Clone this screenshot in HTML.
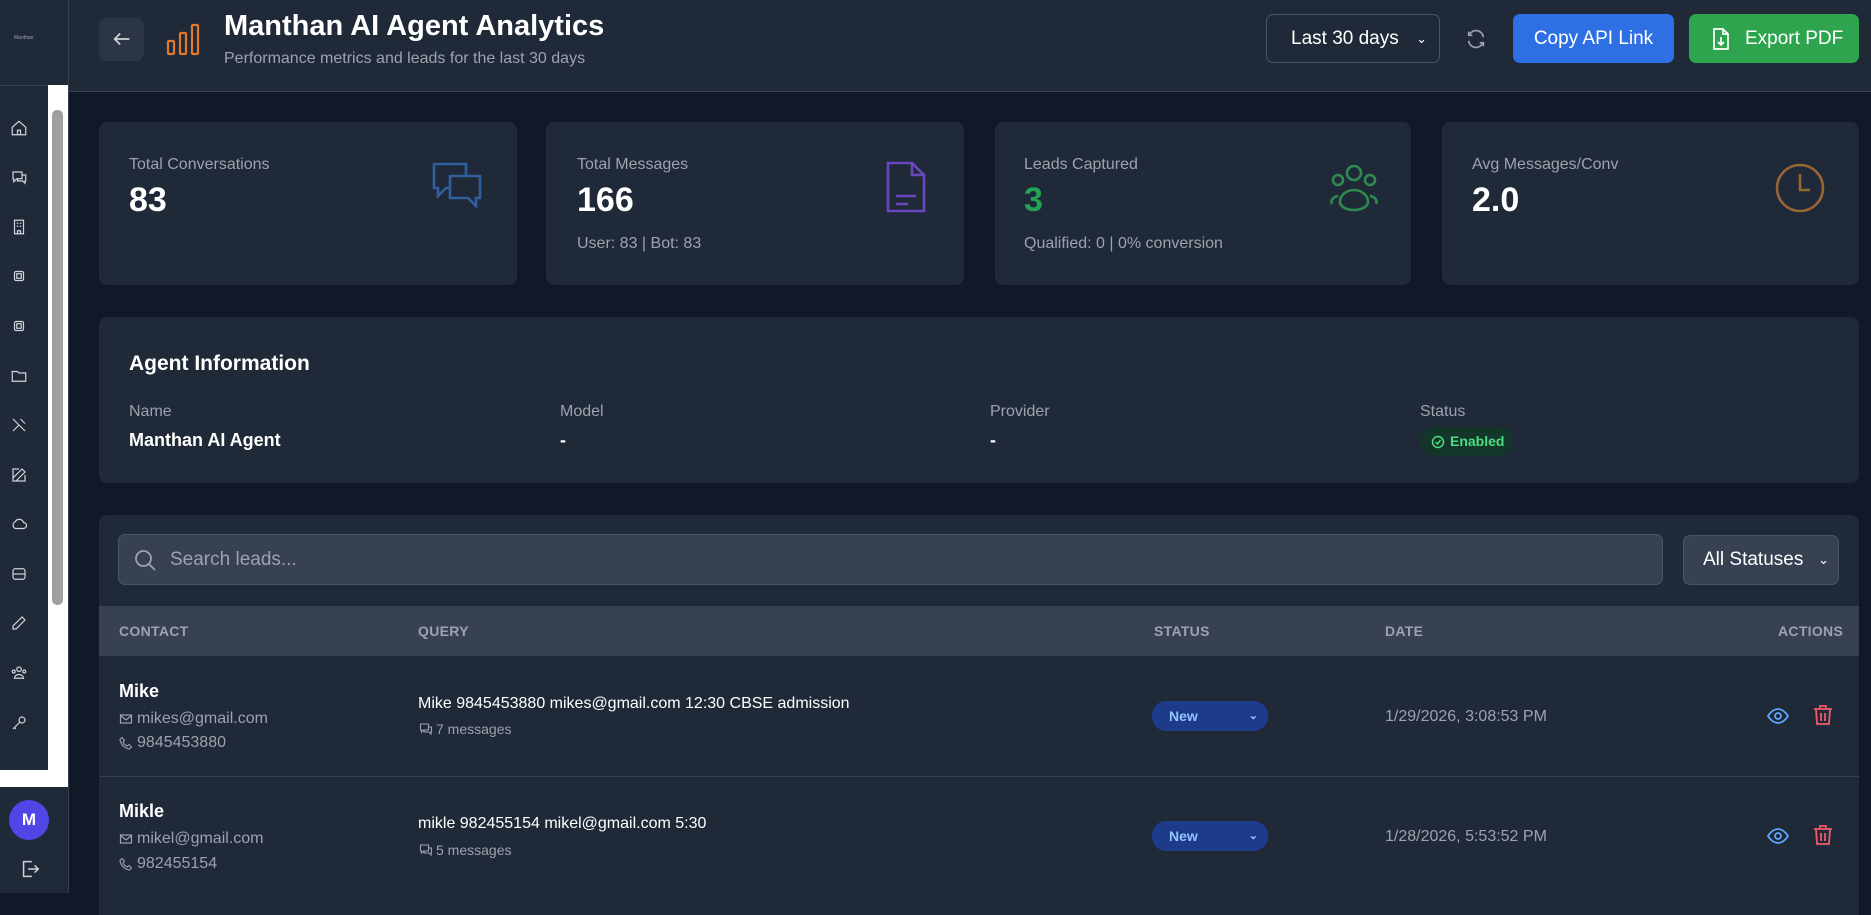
<!DOCTYPE html>
<html><head><meta charset="utf-8"><style>
*{box-sizing:border-box;margin:0;padding:0}
body{width:1871px;height:893px;overflow:hidden;background:#111827;font-family:"Liberation Sans",sans-serif;color:#fff;position:relative}
.a{position:absolute}
.side{left:0;top:0;width:69px;height:893px;background:#1f2937;border-right:1px solid #374151}
.ic{left:10px;width:18px;height:18px;stroke:#d1d5db;fill:none;stroke-width:1.6}
.card{background:#1f2937;border-radius:8px}
.lbl{font-size:16px;color:#9ca3af}
.val{font-size:34px;font-weight:bold}
.sub{font-size:16px;color:#9ca3af}
.th{font-size:14px;color:#9ca3af;top:623px;font-weight:bold;letter-spacing:.3px}
.badge{background:#1e3a8a;color:#93c5fd;border-radius:14px;font-size:14px;font-weight:bold;padding:0 0 0 17px;width:116px;height:30px;line-height:30px}
</style></head><body>
<div class="a side">
 <div class="a" style="left:14px;top:35px;font-size:5px;color:#9ca3af">Manthan</div>
 <div class="a" style="left:0;top:85px;width:69px;border-top:1px solid #374151"></div>
 <div class="a" style="left:48px;top:85px;width:20px;height:702px;background:#fff"></div>
 <div class="a" style="left:52px;top:110px;width:11px;height:495px;background:#a0a0a0;border-radius:5px"></div>
 <div class="a" style="left:0;top:770px;width:68px;height:17px;background:#fff"></div>
 <svg class="a ic" style="top:119px" viewBox="0 0 24 24"><path d="M3 11l9-8 9 8v10H3z M10 21v-6h4v6"/></svg>
 <svg class="a ic" style="top:169px" viewBox="0 0 24 24"><path d="M4 4h12v9H9l-4 4v-4H4z M10 13v3h7l3 3v-3h1V8h-5"/></svg>
 <svg class="a ic" style="top:218px" viewBox="0 0 24 24"><path d="M6 3h12v18H6z M9 7h2 M13 7h2 M9 11h2 M13 11h2 M10 21v-4h4v4"/></svg>
 <svg class="a ic" style="top:267px" viewBox="0 0 24 24"><rect x="6" y="6" width="12" height="12" rx="2"/><rect x="9" y="9" width="6" height="6"/></svg>
 <svg class="a ic" style="top:317px" viewBox="0 0 24 24"><rect x="6" y="6" width="12" height="12" rx="2"/><rect x="9" y="9" width="6" height="6"/></svg>
 <svg class="a ic" style="top:367px" viewBox="0 0 24 24"><path d="M3 6h7l2 2h9v11H3z"/></svg>
 <svg class="a ic" style="top:416px" viewBox="0 0 24 24"><path d="M4 20l8-8 M14 4l6 6 M4 4l16 16"/></svg>
 <svg class="a ic" style="top:466px" viewBox="0 0 24 24"><path d="M4 20h4L20 8l-4-4L4 16z M12 4H4v16h16v-8"/></svg>
 <svg class="a ic" style="top:515px" viewBox="0 0 24 24"><path d="M7 18h11a4 4 0 0 0 0-8 6 6 0 0 0-11-1 5 5 0 0 0 0 9z"/></svg>
 <svg class="a ic" style="top:565px" viewBox="0 0 24 24"><rect x="4" y="5" width="16" height="14" rx="3"/><path d="M4 12h16"/></svg>
 <svg class="a ic" style="top:614px" viewBox="0 0 24 24"><path d="M4 20h4L20 8l-4-4L4 16z"/></svg>
 <svg class="a ic" style="top:664px" viewBox="0 0 24 24"><circle cx="12" cy="7" r="3"/><circle cx="5" cy="10" r="2"/><circle cx="19" cy="10" r="2"/><path d="M6 19a6 5 0 0 1 12 0z"/></svg>
 <svg class="a ic" style="top:714px" viewBox="0 0 24 24"><circle cx="16" cy="8" r="4"/><path d="M13 11l-9 9 M6 18l2 2"/></svg>
 <div class="a" style="left:9px;top:800px;width:40px;height:40px;border-radius:50%;background:#4f46e5;font-weight:bold;font-size:17px;line-height:40px;text-align:center">M</div>
 <svg class="a" style="left:19px;top:858px;width:22px;height:22px;fill:none;stroke:#d1d5db;stroke-width:1.6" viewBox="0 0 24 24"><path d="M14 4H5v16h9 M10 12h11 M17 8l4 4-4 4"/></svg>
</div>
<div class="a" style="left:69px;top:0;width:1802px;height:92px;background:#1f2937;border-bottom:1px solid #374151"></div>
<div class="a" style="left:99px;top:18px;width:45px;height:43px;border-radius:8px;background:#2b3544"></div>
<svg class="a" style="left:111px;top:28px;width:22px;height:22px;fill:none;stroke:#d1d5db;stroke-width:1.8" viewBox="0 0 24 24"><path d="M20 12H4 M10 6l-6 6 6 6"/></svg>
<svg class="a" style="left:166px;top:22px;width:35px;height:34px;fill:none;stroke:#e07a2a;stroke-width:2.2" viewBox="0 0 35 34"><rect x="2" y="19" width="6" height="13" rx="1"/><rect x="14" y="11" width="6" height="21" rx="1"/><rect x="26" y="3" width="6" height="29" rx="1"/></svg>
<div class="a" style="left:224px;top:10px;font-size:29px;font-weight:bold">Manthan AI Agent Analytics</div>
<div class="a" style="left:224px;top:50px;font-size:16px;color:#9ca3af">Performance metrics and leads for the last 30 days</div>
<div class="a" style="left:1266px;top:14px;width:174px;height:49px;border:1px solid #4b5563;border-radius:7px;font-size:19px;line-height:47px;padding-left:24px">Last 30 days <span style="position:absolute;right:12px;font-size:13px">&#8964;</span></div>
<svg class="a" style="left:1465px;top:28px;width:22px;height:22px;fill:none;stroke:#9ca3af;stroke-width:1.8" viewBox="0 0 24 24"><path d="M20 10a8 8 0 0 0-15-3 M4 4v4h4 M4 14a8 8 0 0 0 15 3 M20 20v-4h-4"/></svg>
<div class="a" style="left:1513px;top:14px;width:161px;height:49px;background:#2f6fe4;border-radius:7px;font-size:19px;line-height:49px;text-align:center">Copy API Link</div>
<div class="a" style="left:1689px;top:14px;width:170px;height:49px;background:#2ea44f;border-radius:7px;font-size:19px;line-height:49px;padding-left:56px">Export PDF</div>
<svg class="a" style="left:1711px;top:28px;width:20px;height:22px;fill:none;stroke:#fff;stroke-width:1.7" viewBox="0 0 20 22"><path d="M3 1h9l5 5v15H3z M12 1v5h5 M10 9v8 M7 14l3 3 3-3"/></svg>

<div class="a card" style="left:99px;top:122px;width:418px;height:163px"></div>
<div class="a card" style="left:546px;top:122px;width:418px;height:163px"></div>
<div class="a card" style="left:995px;top:122px;width:416px;height:163px"></div>
<div class="a card" style="left:1442px;top:122px;width:417px;height:163px"></div>
<div class="a lbl" style="left:129px;top:156px">Total Conversations</div>
<div class="a val" style="left:129px;top:181px">83</div>
<div class="a lbl" style="left:577px;top:156px">Total Messages</div>
<div class="a val" style="left:577px;top:181px">166</div>
<div class="a sub" style="left:577px;top:235px">User: 83 | Bot: 83</div>
<div class="a lbl" style="left:1024px;top:156px">Leads Captured</div>
<div class="a val" style="left:1024px;top:181px;color:#22a355">3</div>
<div class="a sub" style="left:1024px;top:235px">Qualified: 0 | 0% conversion</div>
<div class="a lbl" style="left:1472px;top:156px">Avg Messages/Conv</div>
<div class="a val" style="left:1472px;top:181px">2.0</div>
<svg class="a" style="left:430px;top:160px;width:54px;height:52px;fill:none;stroke:#2f5f9e;stroke-width:2.6" viewBox="0 0 54 52"><path d="M4 4h32v24H16l-8 8v-8H4z"/><path d="M20 16h30v22h-4v8l-8-8H20z" fill="#1f2937"/></svg>
<svg class="a" style="left:884px;top:160px;width:44px;height:54px;fill:none;stroke:#6b46c1;stroke-width:2.6" viewBox="0 0 44 54"><path d="M4 3h24l12 12v36H4z M28 3v12h12 M12 36h20 M12 44h12"/></svg>
<svg class="a" style="left:1326px;top:162px;width:56px;height:52px;fill:none;stroke:#2f8a4f;stroke-width:2.6" viewBox="0 0 56 52"><circle cx="28" cy="11" r="7"/><circle cx="12" cy="18" r="5"/><circle cx="44" cy="18" r="5"/><path d="M6 42a8 6 0 0 1 6-8 M50 42a8 6 0 0 0-6-8 M14 40a14 12 0 0 1 28 0a14 8 0 0 1-28 0z"/></svg>
<svg class="a" style="left:1774px;top:162px;width:52px;height:52px;fill:none;stroke:#9a6535;stroke-width:2.6" viewBox="0 0 52 52"><circle cx="26" cy="26" r="23"/><path d="M26 12v16h10"/></svg>

<div class="a card" style="left:99px;top:317px;width:1760px;height:166px"></div>
<div class="a" style="left:129px;top:352px;font-size:21px;font-weight:bold">Agent Information</div>
<div class="a lbl" style="left:129px;top:403px">Name</div>
<div class="a" style="left:129px;top:430px;font-size:18px;font-weight:bold">Manthan AI Agent</div>
<div class="a lbl" style="left:560px;top:403px">Model</div>
<div class="a" style="left:560px;top:430px;font-size:18px;font-weight:bold">-</div>
<div class="a lbl" style="left:990px;top:403px">Provider</div>
<div class="a" style="left:990px;top:430px;font-size:18px;font-weight:bold">-</div>
<div class="a lbl" style="left:1420px;top:403px">Status</div>
<div class="a" style="left:1420px;top:427px;height:29px;width:93px;border-radius:14px;background:#14352a;color:#4ade80;font-size:14px;font-weight:bold;line-height:29px;padding-left:30px">Enabled</div>
<svg class="a" style="left:1431px;top:435px;width:14px;height:14px;fill:none;stroke:#4ade80;stroke-width:1.5" viewBox="0 0 14 14"><circle cx="7" cy="7" r="5.5"/><path d="M4.5 7l2 2 3-4"/></svg>

<div class="a card" style="left:99px;top:515px;width:1760px;height:400px;border-radius:8px 8px 0 0"></div>
<div class="a" style="left:118px;top:534px;width:1545px;height:51px;background:#374151;border:1px solid #4b5563;border-radius:7px;font-size:19px;color:#9ca3af;line-height:49px;padding-left:51px">Search leads...</div>
<svg class="a" style="left:134px;top:549px;width:22px;height:22px;fill:none;stroke:#9ca3af;stroke-width:1.8" viewBox="0 0 22 22"><circle cx="9.5" cy="9.5" r="7.5"/><path d="M15 15l6 6"/></svg>
<div class="a" style="left:1683px;top:535px;width:156px;height:50px;background:#374151;border:1px solid #4b5563;border-radius:7px;font-size:19px;line-height:48px;padding-left:19px">All Statuses <span style="position:absolute;right:9px;font-size:13px">&#8964;</span></div>
<div class="a" style="left:99px;top:606px;width:1760px;height:50px;background:#374151"></div>
<div class="a th" style="left:119px">CONTACT</div>
<div class="a th" style="left:418px">QUERY</div>
<div class="a th" style="left:1154px">STATUS</div>
<div class="a th" style="left:1385px">DATE</div>
<div class="a th" style="left:1778px">ACTIONS</div>

<div class="a" style="left:119px;top:681px;font-size:18px;font-weight:bold">Mike</div>
<div class="a sub" style="left:137px;top:710px;font-size:16px">mikes@gmail.com</div>
<div class="a sub" style="left:137px;top:734px;font-size:16px">9845453880</div>
<div class="a" style="left:418px;top:695px;font-size:16px">Mike 9845453880 mikes@gmail.com 12:30 CBSE admission</div>
<div class="a" style="left:436px;top:721px;font-size:14px;color:#9ca3af">7 messages</div>
<div class="a badge" style="left:1152px;top:701px">New<span style="position:absolute;right:10px;font-size:11px">&#8964;</span></div>
<div class="a sub" style="left:1385px;top:708px;font-size:16px">1/29/2026, 3:08:53 PM</div>
<div class="a" style="left:99px;top:776px;width:1760px;border-top:1px solid #374151"></div>
<div class="a" style="left:119px;top:801px;font-size:18px;font-weight:bold">Mikle</div>
<div class="a sub" style="left:137px;top:830px;font-size:16px">mikel@gmail.com</div>
<div class="a sub" style="left:137px;top:855px;font-size:16px">982455154</div>
<div class="a" style="left:418px;top:815px;font-size:16px">mikle 982455154 mikel@gmail.com 5:30</div>
<div class="a" style="left:436px;top:842px;font-size:14px;color:#9ca3af">5 messages</div>
<div class="a badge" style="left:1152px;top:821px">New<span style="position:absolute;right:10px;font-size:11px">&#8964;</span></div>
<div class="a sub" style="left:1385px;top:828px;font-size:16px">1/28/2026, 5:53:52 PM</div>

<svg width="0" height="0"><defs>
<symbol id="mail" viewBox="0 0 14 14"><rect x="1.5" y="3" width="11" height="8" fill="none" stroke="#9ca3af" stroke-width="1.2"/><path d="M1.5 3.5L7 8l5.5-4.5" fill="none" stroke="#9ca3af" stroke-width="1.2"/></symbol>
<symbol id="ph" viewBox="0 0 14 14"><path d="M3 1.5l2.5 2.5-1.5 2a8 8 0 0 0 4 4l2-1.5 2.5 2.5-2 2A11 11 0 0 1 1 3.5z" fill="none" stroke="#9ca3af" stroke-width="1.1"/></symbol>
<symbol id="msg" viewBox="0 0 14 14"><path d="M1.5 2h8v6h-5l-2 2V8h-1z M5 8v2h5l2 2v-2h.5V5h-3" fill="none" stroke="#9ca3af" stroke-width="1.1"/></symbol>
<symbol id="eye" viewBox="0 0 24 24"><path d="M2 12s4-7 10-7 10 7 10 7-4 7-10 7S2 12 2 12z" fill="none" stroke="#60a5fa" stroke-width="1.8"/><circle cx="12" cy="12" r="3" fill="none" stroke="#60a5fa" stroke-width="1.8"/></symbol>
<symbol id="tr" viewBox="0 0 24 24"><path d="M3 6h18 M9 6V3h6v3 M5 6l1 15h12l1-15 M10 10v8 M14 10v8" fill="none" stroke="#f05a6a" stroke-width="1.8"/></symbol>
</defs></svg>
<svg class="a" style="left:119px;top:712px;width:14px;height:14px"><use href="#mail"/></svg>
<svg class="a" style="left:119px;top:736px;width:14px;height:14px"><use href="#ph"/></svg>
<svg class="a" style="left:419px;top:722px;width:14px;height:14px"><use href="#msg"/></svg>
<svg class="a" style="left:119px;top:832px;width:14px;height:14px"><use href="#mail"/></svg>
<svg class="a" style="left:119px;top:857px;width:14px;height:14px"><use href="#ph"/></svg>
<svg class="a" style="left:419px;top:843px;width:14px;height:14px"><use href="#msg"/></svg>
<svg class="a" style="left:1766px;top:704px;width:24px;height:24px"><use href="#eye"/></svg>
<svg class="a" style="left:1811px;top:703px;width:24px;height:24px"><use href="#tr"/></svg>
<svg class="a" style="left:1766px;top:824px;width:24px;height:24px"><use href="#eye"/></svg>
<svg class="a" style="left:1811px;top:823px;width:24px;height:24px"><use href="#tr"/></svg>
</body></html>
